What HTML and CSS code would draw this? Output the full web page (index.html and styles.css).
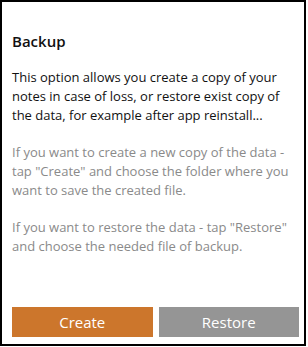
FILE: index.html
```html
<!DOCTYPE html>
<html lang="en">

<head>
    <meta charset="UTF-8">
    <title>Backup</title>
    <link rel="stylesheet" href="styles.css">
</head>

<body>
    <div class="dialog">
        <h2 class="title">Backup</h2>
        <p class="intro">This option allows you create a copy of your notes in case of loss, or restore exist copy of the data, for example after app reinstall...</p>
        <p class="hint">If you want to create a new copy of the data - tap "Create" and choose the folder where you want to save the created file.</p>
        <p class="hint">If you want to restore the data - tap "Restore" and choose the needed file of backup.</p>
        <div class="actions">
            <button class="btn btn-create">Create</button>
            <button class="btn btn-restore">Restore</button>
        </div>
    </div>
</body>

</html>
```

FILE: styles.css
```css
body {
    margin: 0;
    background-color: #ffffff;
    font-family: "Open Sans", "Noto Sans", sans-serif;
}

.dialog {
    box-sizing: border-box;
    width: 306px;
    height: 346px;
    border: 2px solid #000;
    padding: 28px 5px 7px 10px;
    display: flex;
    flex-direction: column;
}

.title {
    margin: 0 0 16px 0;
    font-size: 15px;
    line-height: 22px;
    font-weight: 600;
    color: #111;
}

.intro,
.hint {
    margin: 0 0 18px 0;
    font-size: 13px;
    line-height: 19px;
    color: #111;
}

.hint {
    color: #8a8a8a;
}

.actions {
    margin-top: auto;
    display: flex;
    gap: 6px;
}

.btn {
    flex: 1;
    height: 30px;
    border: none;
    font-family: inherit;
    font-size: 15px;
    color: #fff;
}

.btn-create {
    background-color: #cc762c;
}

.btn-restore {
    background-color: #959595;
}
```
